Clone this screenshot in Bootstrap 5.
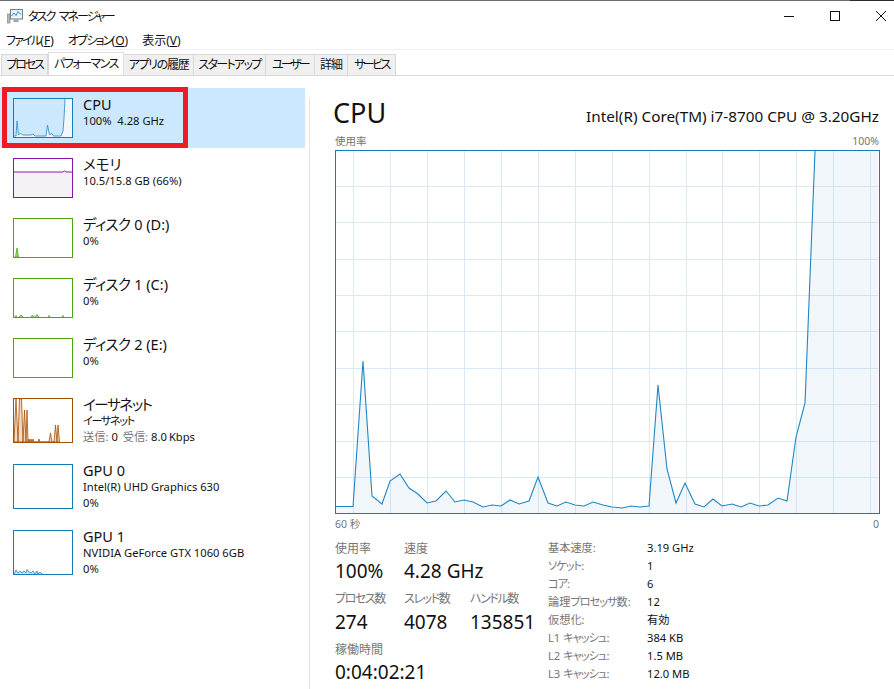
<!DOCTYPE html>
<html lang="ja">
<head>
<meta charset="utf-8">
<title>タスク マネージャー</title>
<link href="https://cdn.jsdelivr.net/npm/bootstrap@5.3.0/dist/css/bootstrap.min.css" rel="stylesheet">
<style>
html,body{height:100%;overflow:hidden;background:#fff}
body{font-family:"Noto Sans","Noto Sans CJK JP",sans-serif;font-size:12px;line-height:1.25;color:#111;font-feature-settings:"palt"}
.tm-window{width:894px;height:689px;overflow:hidden}
.tm-edge{height:1px;background:linear-gradient(to right,#6e6e6e 850px,#2b2b2b 850px)}
.tm-title{height:29px;padding-left:7px;padding-top:1px}
.tm-title-text{margin-left:5px;font-size:12px;letter-spacing:-1.9px;word-spacing:3px}
.tm-ctrls{gap:36px;padding-right:8px}
.tm-menu{height:20px;padding-left:6px;font-size:12px;padding-top:2px;border-bottom:1px solid #f0f0f0}
.tm-menu span{white-space:nowrap}
.tm-menu>span{margin-right:14px}
.tm-menu .kn{letter-spacing:-1.8px}
.kn{letter-spacing:-1.4px}
.kn2{letter-spacing:-.6px}
.kn3{letter-spacing:-1px}
.tm-tabs{height:26px;padding:4px 0 0 1px;border-bottom:1px solid #d9d9d9;flex-wrap:nowrap;--bs-nav-tabs-border-width:0}
.tm-tabs .nav-link{height:21px;margin:0;padding:1px 0 0;text-align:center;font-size:12px;line-height:18px;color:#111;background:#f0f0f0;border:1px solid #d9d9d9;border-bottom:0;border-left:0;border-radius:0;white-space:nowrap}
.tm-tabs .nav-item:first-child .nav-link{border-left:1px solid #d9d9d9}
.tm-tabs .nav-link.active{height:23px;margin-top:-2px;padding-top:2px;background:#fff;border-left:1px solid #d9d9d9;color:#111}
.tw1{width:47px;letter-spacing:-2.2px}.tw2{width:76px;letter-spacing:-1.5px}.tw3{width:70px;letter-spacing:-1.3px}.tw4{width:72px;letter-spacing:-1.7px}.tw5{width:49px;letter-spacing:-2.6px}.tw6{width:33px;letter-spacing:-1px}.tw7{width:48px;letter-spacing:-2.6px}
.tm-body{height:613px}
.tm-side{width:305px;padding-top:12px;flex:none}
.tm-item{display:flex;height:60px;padding:10px 0 0 13px;background:transparent;border:0;border-radius:0;position:relative;color:#111}
.tm-item.tall{height:66px}
.tm-item.picked{background:#cce8ff}
.tm-thumb{flex:none;display:block}
.tm-info{margin-left:10px;margin-top:-3px;white-space:nowrap}
.tm-name{font-size:14.5px;line-height:18px}
.tm-sub{font-size:11.2px;line-height:15.5px;margin-top:0}
.tm-sub.s2{margin-top:0}
.tm-mute{color:#767676}
.tm-gap{margin:0 2px 0 3px}
.tm-redbox{position:absolute;left:2px;top:-1px;width:186px;height:61px;border:5px solid #ed1c24;pointer-events:none}
.tm-rule{width:1px;background:#e3e3e3;margin:22px 0 0 4px;flex:none}
.tm-main{width:584px;padding:19px 0 0 23px;flex:none}
.tm-head{width:546px;height:36px;align-items:flex-end}
.tm-bigtitle{font-size:27px;line-height:36px;color:#111}
.tm-model{font-size:15.3px;line-height:20px;margin-bottom:5px;white-space:nowrap}
.tm-cap{width:544px;margin-left:2px;height:16px;font-size:10.5px;line-height:14px;color:#767676;margin-top:3px}
.tm-chart{display:block;margin-left:2px}
.tm-cap.low{margin-top:3px;height:14px}
.tm-stats{margin:10px 0 0 2px}
.tm-left{width:213px;flex:none}
.tm-trio{display:grid;grid-template-columns:69px 66px auto;white-space:nowrap}
.tm-lab{font-size:12px;line-height:16px;color:#767676}
.tm-val{font-size:19px;line-height:24px;margin-top:2px;color:#111;margin-bottom:8px}
.tm-val.more{margin-top:3px;margin-bottom:8px}
.tm-specs{display:grid;grid-template-columns:99px auto;grid-auto-rows:18px;font-size:11.2px;line-height:18px;white-space:nowrap;margin-top:-2.5px}
.tm-specs .k{color:#767676}
</style>
</head>
<body>
<div class="tm-window d-flex flex-column">
  <div class="tm-edge"></div>
  <div class="tm-title d-flex align-items-center justify-content-between">
    <div class="d-flex align-items-center">
      <svg width="16" height="16" viewBox="0 0 16 16"><rect x="0.5" y="6" width="2.5" height="9" fill="#b9b9b9" stroke="#777" stroke-width=".6"/><rect x="3.5" y="1.5" width="12" height="9.5" fill="#eaf4fb" stroke="#6f7f8c"/><path d="M4.5 8l2.500-3 2 2.500 2-4 3 3" fill="none" stroke="#3a86c0"/><path d="M7 11h4l1 3H6z" fill="#a9a9a9"/></svg>
      <span class="tm-title-text">タスク マネージャー</span>
    </div>
    <div class="tm-ctrls d-flex align-items-center">
      <svg width="10" height="10" viewBox="0 0 10 10"><path d="M0 5.500h10" stroke="#111"/></svg>
      <svg width="10" height="10" viewBox="0 0 10 10"><rect x=".5" y=".5" width="9" height="9" fill="none" stroke="#111"/></svg>
      <svg width="10" height="10" viewBox="0 0 10 10"><path d="M0 0l10 10M10 0L0 10" stroke="#111" stroke-width="1"/></svg>
    </div>
  </div>
  <div class="tm-menu d-flex align-items-center">
    <span><span class="kn">ファイル</span>(<u>F</u>)</span><span><span class="kn">オプション</span>(<u>O</u>)</span><span>表示(<u>V</u>)</span>
  </div>
  <ul class="nav nav-tabs tm-tabs">
    <li class="nav-item"><a class="nav-link tw1" href="#">プロセス</a></li>
    <li class="nav-item"><a class="nav-link active tw2" href="#">パフォーマンス</a></li>
    <li class="nav-item"><a class="nav-link tw3" href="#">アプリの履歴</a></li>
    <li class="nav-item"><a class="nav-link tw4" href="#">スタートアップ</a></li>
    <li class="nav-item"><a class="nav-link tw5" href="#">ユーザー</a></li>
    <li class="nav-item"><a class="nav-link tw6" href="#">詳細</a></li>
    <li class="nav-item"><a class="nav-link tw7" href="#">サービス</a></li>
  </ul>
  <div class="tm-body d-flex">
    <div class="tm-side list-group list-group-flush">
      <div class="tm-item picked">
        <svg class="tm-thumb" width="60" height="40" viewBox="0 0 60 40"><path d="M1 39V38H3L4 23 5.500 37 7.500 35 9.500 37H18L20 36 22 38H33L34.500 27 36.500 37 38.500 35 40.500 38H48L50 33 51 20 52 1H59V39Z" fill="#f1f6fa"/><path d="M1 38H3L4 23 5.500 37 7.500 35 9.500 37H18L20 36 22 38H33L34.500 27 36.500 37 38.500 35 40.500 38H48L50 33 51 20 52 1" fill="none" stroke="#4a9ccb"/><rect x=".5" y=".5" width="59" height="39" fill="none" stroke="#117dbb"/></svg>
        <div class="tm-info"><div class="tm-name">CPU</div><div class="tm-sub">100%&nbsp; 4.28 GHz</div></div>
        <div class="tm-redbox"></div>
      </div>
      <div class="tm-item">
        <svg class="tm-thumb" width="60" height="40" viewBox="0 0 60 40"><rect x="1" y="14" width="58" height="25" fill="#f4f2f4"/><path d="M1 14H50L51.500 13 53 14H59" fill="none" stroke="#8b12ae"/><rect x=".5" y=".5" width="59" height="39" fill="none" stroke="#8b12ae"/></svg>
        <div class="tm-info"><div class="tm-name">メモリ</div><div class="tm-sub">10.5/15.8 GB (66%)</div></div>
      </div>
      <div class="tm-item">
        <svg class="tm-thumb" width="60" height="40" viewBox="0 0 60 40"><path d="M2.500 39L4 30 5.500 39Z" fill="#a9d585" stroke="#4da60c" stroke-width=".8"/><rect x=".5" y=".5" width="59" height="39" fill="none" stroke="#4da60c"/></svg>
        <div class="tm-info"><div class="tm-name"><span class="kn2">ディスク</span> 0 (D:)</div><div class="tm-sub">0%</div></div>
      </div>
      <div class="tm-item">
        <svg class="tm-thumb" width="60" height="40" viewBox="0 0 60 40"><path d="M2 39L3 37.500 4 39M6 39L8 37 10 39M18 39L19.500 37 21 39M22 39L24 36.500 26 39M35 39L36 37.500 37 39M49 39L50 37.500 51 39" fill="#a9d585" stroke="#4da60c" stroke-width=".8"/><rect x=".5" y=".5" width="59" height="39" fill="none" stroke="#4da60c"/></svg>
        <div class="tm-info"><div class="tm-name"><span class="kn2">ディスク</span> 1 (C:)</div><div class="tm-sub">0%</div></div>
      </div>
      <div class="tm-item">
        <svg class="tm-thumb" width="60" height="40" viewBox="0 0 60 40"><rect x=".5" y=".5" width="59" height="39" fill="none" stroke="#4da60c"/></svg>
        <div class="tm-info"><div class="tm-name"><span class="kn2">ディスク</span> 2 (E:)</div><div class="tm-sub">0%</div></div>
      </div>
      <div class="tm-item tall">
        <svg class="tm-thumb" width="60" height="45" viewBox="0 0 60 45"><path d="M1 44L3 1 5 44 6.500 1H8.500L10 44 11.500 12 13 44 14 12 15 44 16 41 17 44 18 41 19 44 20 41 21 44 25 44 26 41 27 44 36 44 37.500 35 39 44 41 44 42.500 27 44 44 45 27 46.500 44Z" fill="#efd9c4" stroke="#a74f01" stroke-width=".8"/><rect x=".5" y=".5" width="59" height="44" fill="none" stroke="#a74f01"/></svg>
        <div class="tm-info"><div class="tm-name"><span class="kn">イーサネット</span></div><div class="tm-sub"><span class="kn">イーサネット</span></div><div class="tm-sub s2"><span class="tm-mute">送信:</span><span class="tm-gap">0</span> <span class="tm-mute">受信:</span><span class="tm-gap">8.0</span>Kbps</div></div>
      </div>
      <div class="tm-item tall">
        <svg class="tm-thumb" width="60" height="45" viewBox="0 0 60 45"><rect x=".5" y=".5" width="59" height="44" fill="none" stroke="#117dbb"/></svg>
        <div class="tm-info"><div class="tm-name">GPU 0</div><div class="tm-sub">Intel(R) UHD Graphics 630</div><div class="tm-sub s2">0%</div></div>
      </div>
      <div class="tm-item tall">
        <svg class="tm-thumb" width="60" height="45" viewBox="0 0 60 45"><path d="M1 44L3 40 5 43 7 41 9 43 11 41 13 43 14 39.500 16 42 18 43 20 41 22 44M22 44L24 41 25 44 27 42 29 44" fill="#cfe3f1" stroke="#1a85c2" stroke-width=".8"/><rect x=".5" y=".5" width="59" height="44" fill="none" stroke="#117dbb"/></svg>
        <div class="tm-info"><div class="tm-name">GPU 1</div><div class="tm-sub">NVIDIA GeForce GTX 1060 6GB</div><div class="tm-sub s2">0%</div></div>
      </div>
    </div>
    <div class="tm-rule"></div>
    <div class="tm-main">
      <div class="tm-head d-flex justify-content-between">
        <div class="tm-bigtitle">CPU</div>
        <div class="tm-model">Intel(R) Core(TM) i7-8700 CPU @ 3.20GHz</div>
      </div>
      <div class="tm-cap d-flex justify-content-between"><span>使用率</span><span>100%</span></div>
      <svg class="tm-chart" width="545" height="364" viewBox="335 151 545 364">
        <g stroke="#d9eaf4" stroke-width="1" fill="none">
          <path d="M336 187.500H878M336 223.500H878M336 260.500H878M336 296.500H878M336 332.500H878M336 369.500H878M336 405.500H878M336 442.500H878M336 478.500H878"/>
          <path d="M353.500 152V514M390.500 152V514M427.500 152V514M464.500 152V514M501.500 152V514M538.500 152V514M575.500 152V514M612.500 152V514M649.500 152V514M686.500 152V514M722.500 152V514M759.500 152V514M796.500 152V514M833.500 152V514M870.500 152V514"/>
        </g>
        <path d="M336 514V507.500H353L363 362 372 497 382 505 390 482 400 475 409 489 418 495 427 504 436 502 446 492 455 503 464 501 473 503 483 508 492 506 501 507 510 501 519 505 529 502 538 478 548 504 557 507 566 503 575 506 584 507 593 503 603 506 612 508 622 509 631 507 640 508 649 507 658 386 667 470 676 504 685 484 695 505 704 508 713 500 722 507 732 505 741 508 750 504 759 507 768 506 778 499 787 502 796 438 805 404 815 152H878V514Z" fill="#8fb9d9" fill-opacity=".13"/>
        <path d="M336 507.500H353L363 362 372 497 382 505 390 482 400 475 409 489 418 495 427 504 436 502 446 492 455 503 464 501 473 503 483 508 492 506 501 507 510 501 519 505 529 502 538 478 548 504 557 507 566 503 575 506 584 507 593 503 603 506 612 508 622 509 631 507 640 508 649 507 658 386 667 470 676 504 685 484 695 505 704 508 713 500 722 507 732 505 741 508 750 504 759 507 768 506 778 499 787 502 796 438 805 404 815 152" fill="none" stroke="#1f88c4" stroke-width="1.1"/>
        <rect x="335.500" y="151.500" width="544" height="363" fill="none" stroke="#117dbb"/>
      </svg>
      <div class="tm-cap low d-flex justify-content-between"><span>60 秒</span><span>0</span></div>
      <div class="tm-stats d-flex">
        <div class="tm-left">
          <div class="tm-trio">
            <div><div class="tm-lab">使用率</div><div class="tm-val">100%</div></div>
            <div><div class="tm-lab">速度</div><div class="tm-val">4.28 GHz</div></div>
            <div></div>
            <div><div class="tm-lab"><span class="kn">プロセス</span>数</div><div class="tm-val more">274</div></div>
            <div><div class="tm-lab"><span class="kn">スレッド</span>数</div><div class="tm-val more">4078</div></div>
            <div><div class="tm-lab"><span class="kn">ハンドル</span>数</div><div class="tm-val more">135851</div></div>
          </div>
          <div class="tm-lab">稼働時間</div><div class="tm-val">0:04:02:21</div>
        </div>
        <div class="tm-specs">
          <div class="k">基本速度:</div><div>3.19 GHz</div>
          <div class="k"><span class="kn3">ソケット</span>:</div><div>1</div>
          <div class="k"><span class="kn3">コア</span>:</div><div>6</div>
          <div class="k">論理<span class="kn3">プロセッサ</span>数:</div><div>12</div>
          <div class="k">仮想化:</div><div>有効</div>
          <div class="k">L1 <span class="kn3">キャッシュ</span>:</div><div>384 KB</div>
          <div class="k">L2 <span class="kn3">キャッシュ</span>:</div><div>1.5 MB</div>
          <div class="k">L3 <span class="kn3">キャッシュ</span>:</div><div>12.0 MB</div>
        </div>
      </div>
    </div>
  </div>
</div>
<script src="https://cdn.jsdelivr.net/npm/bootstrap@5.3.0/dist/js/bootstrap.bundle.min.js"></script>
</body>
</html>
